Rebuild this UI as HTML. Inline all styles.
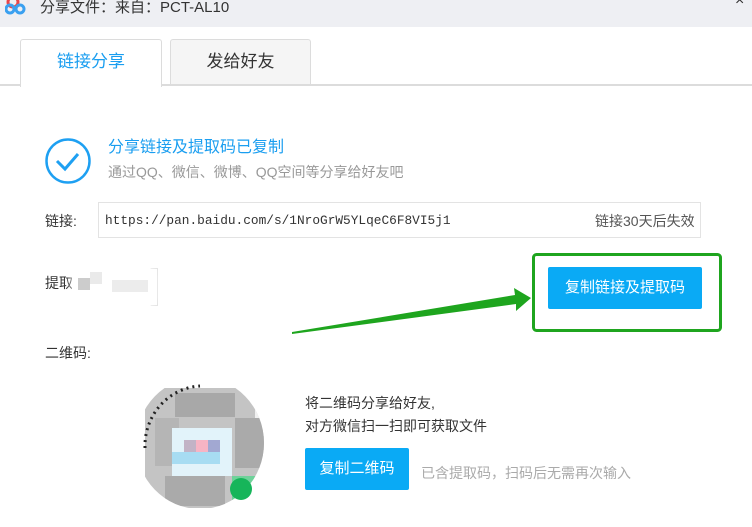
<!DOCTYPE html>
<html><head><meta charset="utf-8"><style>
*{margin:0;padding:0;box-sizing:border-box}
body{width:752px;height:527px;background:#fff;position:relative;overflow:hidden;font-family:"Liberation Sans","Noto Sans CJK SC",sans-serif;color:#333}
.a{position:absolute}
.title{left:0;top:0;width:752px;height:27px;background:#eeeff3}
.tab{top:39px;height:46px;border:1px solid #dcdcdc;border-bottom:none;border-radius:3px 3px 0 0;font-size:17px;text-align:center;line-height:44px}
</style></head><body>
<div class="a title"></div>
<svg class="a" style="left:5px;top:0" width="26" height="16" viewBox="0 0 26 16"><circle cx="8" cy="2" r="5" fill="none" stroke="#e8454a" stroke-width="3"/><circle cx="5" cy="9" r="4" fill="none" stroke="#3aa0f0" stroke-width="3"/><circle cx="15" cy="9" r="4" fill="none" stroke="#3aa0f0" stroke-width="3"/></svg>
<div class="a" style="left:40px;top:-4px;font-size:15px;color:#333">分享文件：来自：PCT-AL10</div>
<div class="a" style="left:735px;top:-8px;font-size:16px;color:#333">×</div>
<div class="a" style="left:0;top:84px;width:752px;height:2px;background:#dcdcdc"></div>
<div class="a tab" style="left:20px;width:142px;background:#fff;color:#1a9ef0;height:48px">链接分享</div>
<div class="a tab" style="left:170px;width:141px;background:#f5f5f5;color:#333;height:45px">发给好友</div>
<svg class="a" style="left:44px;top:137px" width="48" height="48" viewBox="0 0 48 48"><circle cx="24" cy="24" r="21.5" fill="none" stroke="#1ea0f2" stroke-width="2.5"/><path d="M13 24 L21 32 L34 17" fill="none" stroke="#1ea0f2" stroke-width="3"/></svg>
<div class="a" style="left:108px;top:133px;font-size:16px;color:#1a9ef0">分享链接及提取码已复制</div>
<div class="a" style="left:108px;top:162px;font-size:14px;color:#999">通过QQ、微信、微博、QQ空间等分享给好友吧</div>
<div class="a" style="left:45px;top:211px;font-size:14px;color:#333">链接:</div>
<div class="a" style="left:98px;top:202px;width:603px;height:36px;border:1px solid #e3e3e3"></div>
<div class="a" style="left:105px;top:213px;font-family:'Liberation Mono',monospace;font-size:12.8px;color:#333">https://pan.baidu.com/s/1NroGrW5YLqeC6F8VI5j1</div>
<div class="a" style="left:595px;top:211px;font-size:14px;color:#555">链接30天后失效</div>
<div class="a" style="left:45px;top:273px;font-size:14px;color:#333">提取码</div>
<div class="a" style="left:78px;top:268px;width:80px;height:38px;border:1px solid #e3e3e3"></div>
<div class="a" style="left:72px;top:266px;width:82px;height:42px;background:#fff;border-radius:10px;box-shadow:0 0 8px #fff"></div>
<div class="a" style="left:78px;top:278px;width:12px;height:12px;background:#ccc"></div>
<div class="a" style="left:90px;top:272px;width:12px;height:12px;background:#eaeaea"></div>
<div class="a" style="left:112px;top:280px;width:36px;height:12px;background:#ececec"></div>
<svg class="a" style="left:0;top:0" width="752" height="527"><polygon points="292,332 515,295 514,288 531,298 516,311 516,304 292,334" fill="#1ea51e"/><rect x="533.5" y="254.5" width="187" height="76" rx="3" fill="none" stroke="#1fa51f" stroke-width="3"/></svg>
<div class="a" style="left:45px;top:343px;font-size:14px;color:#333">二维码:</div>
<div class="a" style="left:548px;top:267px;width:154px;height:42px;background:#0aaaf5;border-radius:2px;color:#fff;font-size:15px;text-align:center;line-height:42px">复制链接及提取码</div>
<svg class="a" style="left:135px;top:378px" width="140" height="135" viewBox="0 0 140 135">
<defs><clipPath id="c"><ellipse cx="65" cy="65" rx="64" ry="66"/></clipPath></defs>
<g clip-path="url(#c)">
<rect x="0" y="0" width="140" height="135" fill="#fff"/>
<rect x="10" y="10" width="125" height="120" fill="#c4c4c4"/>
<rect x="40" y="15" width="60" height="24" fill="#a8a8a8"/>
<rect x="20" y="40" width="24" height="48" fill="#b5b5b5"/>
<rect x="100" y="40" width="36" height="50" fill="#aaa"/>
<rect x="37" y="50" width="60" height="48" fill="#e2f3fa"/>
<rect x="49" y="62" width="12" height="12" fill="#c2b3c6"/>
<rect x="61" y="62" width="12" height="12" fill="#f7b4c4"/>
<rect x="73" y="62" width="12" height="12" fill="#a2a8d2"/>
<rect x="37" y="74" width="48" height="12" fill="#a7dcf2"/>
<rect x="30" y="98" width="60" height="30" fill="#aaa"/>
<rect x="97" y="98" width="24" height="24" fill="#6fd29a"/>
<rect x="120" y="20" width="20" height="20" fill="#f0f0f0"/>
</g>
<circle cx="106" cy="111" r="11" fill="#16b55a"/>
<path d="M10 70 A58 60 0 0 1 65 8" fill="none" stroke="#222" stroke-width="3" stroke-dasharray="2 4"/>
</svg>
<div class="a" style="left:305px;top:393px;font-size:14px;color:#333">将二维码分享给好友,</div>
<div class="a" style="left:305px;top:416px;font-size:14px;color:#333">对方微信扫一扫即可获取文件</div>
<div class="a" style="left:305px;top:448px;width:104px;height:42px;background:#0aaaf5;border-radius:2px;color:#fff;font-size:15px;text-align:center;line-height:42px">复制二维码</div>
<div class="a" style="left:421px;top:463px;font-size:14px;color:#aaa">已含提取码，扫码后无需再次输入</div>
</body></html>
